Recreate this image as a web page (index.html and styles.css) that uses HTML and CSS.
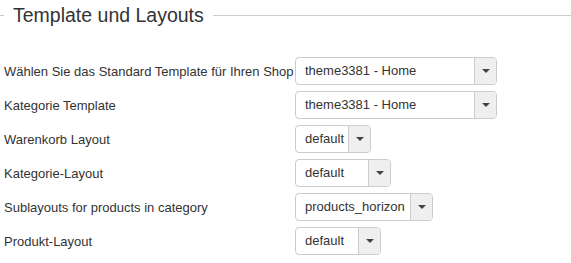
FILE: index.html
```html
<!DOCTYPE html>
<html>
  <head>
    <meta charset="utf-8" />
    <link rel="stylesheet" href="styles.css">
  </head>
  <body>
    <fieldset class="settings">
      <legend>Template und Layouts</legend>

      <div class="rows">
        <label>Wählen Sie das Standard Template für Ihren Shop</label>
        <div class="select wide">
          <div class="select-text"><span>theme3381 - Home</span></div>
          <div class="select-btn"><i class="caret"></i></div>
        </div>

        <label>Kategorie Template</label>
        <div class="select wide">
          <div class="select-text"><span>theme3381 - Home</span></div>
          <div class="select-btn"><i class="caret"></i></div>
        </div>

        <label>Warenkorb Layout</label>
        <div class="select cart">
          <div class="select-text"><span>default</span></div>
          <div class="select-btn"><i class="caret"></i></div>
        </div>

        <label>Kategorie-Layout</label>
        <div class="select category">
          <div class="select-text"><span>default</span></div>
          <div class="select-btn"><i class="caret"></i></div>
        </div>

        <label>Sublayouts for products in category</label>
        <div class="select sublayout">
          <div class="select-text"><span>products_horizon</span></div>
          <div class="select-btn"><i class="caret"></i></div>
        </div>

        <label>Produkt-Layout</label>
        <div class="select product">
          <div class="select-text"><span>default</span></div>
          <div class="select-btn"><i class="caret"></i></div>
        </div>
      </div>
    </fieldset>
  </body>
</html>
```

FILE: styles.css
```css
body {
  background-color: #fff;
  color: #333;
  font-family: "Liberation Sans", Arial, sans-serif;
  font-size: 13px;
  margin: 0;
  padding: 0;
}

.settings {
  margin: 0;
  padding: 0 0 0 4px;
  border: none;
  border-top: 1px solid #ccc;
}

.settings legend {
  font-size: 19.5px;
  line-height: 30px;
  padding: 0 9px;
  color: #333;
}

.rows {
  display: grid;
  grid-template-columns: 291px auto;
  row-gap: 6px;
  align-items: center;
  justify-items: start;
  margin-top: 27px;
}

.select {
  display: flex;
  height: 28px;
  box-sizing: border-box;
  border: 1px solid #ccc;
  border-radius: 4px;
  background-color: #fff;
  overflow: hidden;
}

.select-text {
  flex: 1;
  min-width: 0;
  padding: 0 4px 0 9px;
  line-height: 26px;
  white-space: nowrap;
}

.select-btn {
  width: 21px;
  flex: none;
  border-left: 1px solid #ccc;
  background-color: #efefef;
  display: flex;
  align-items: center;
  justify-content: center;
}

.caret {
  width: 0;
  height: 0;
  border-left: 4px solid transparent;
  border-right: 4px solid transparent;
  border-top: 4px solid #444;
}

.wide {
  width: 202px;
}

.cart {
  width: 76px;
}

.category {
  width: 96px;
}

.sublayout {
  width: 138px;
}

.product {
  width: 86px;
}
```
